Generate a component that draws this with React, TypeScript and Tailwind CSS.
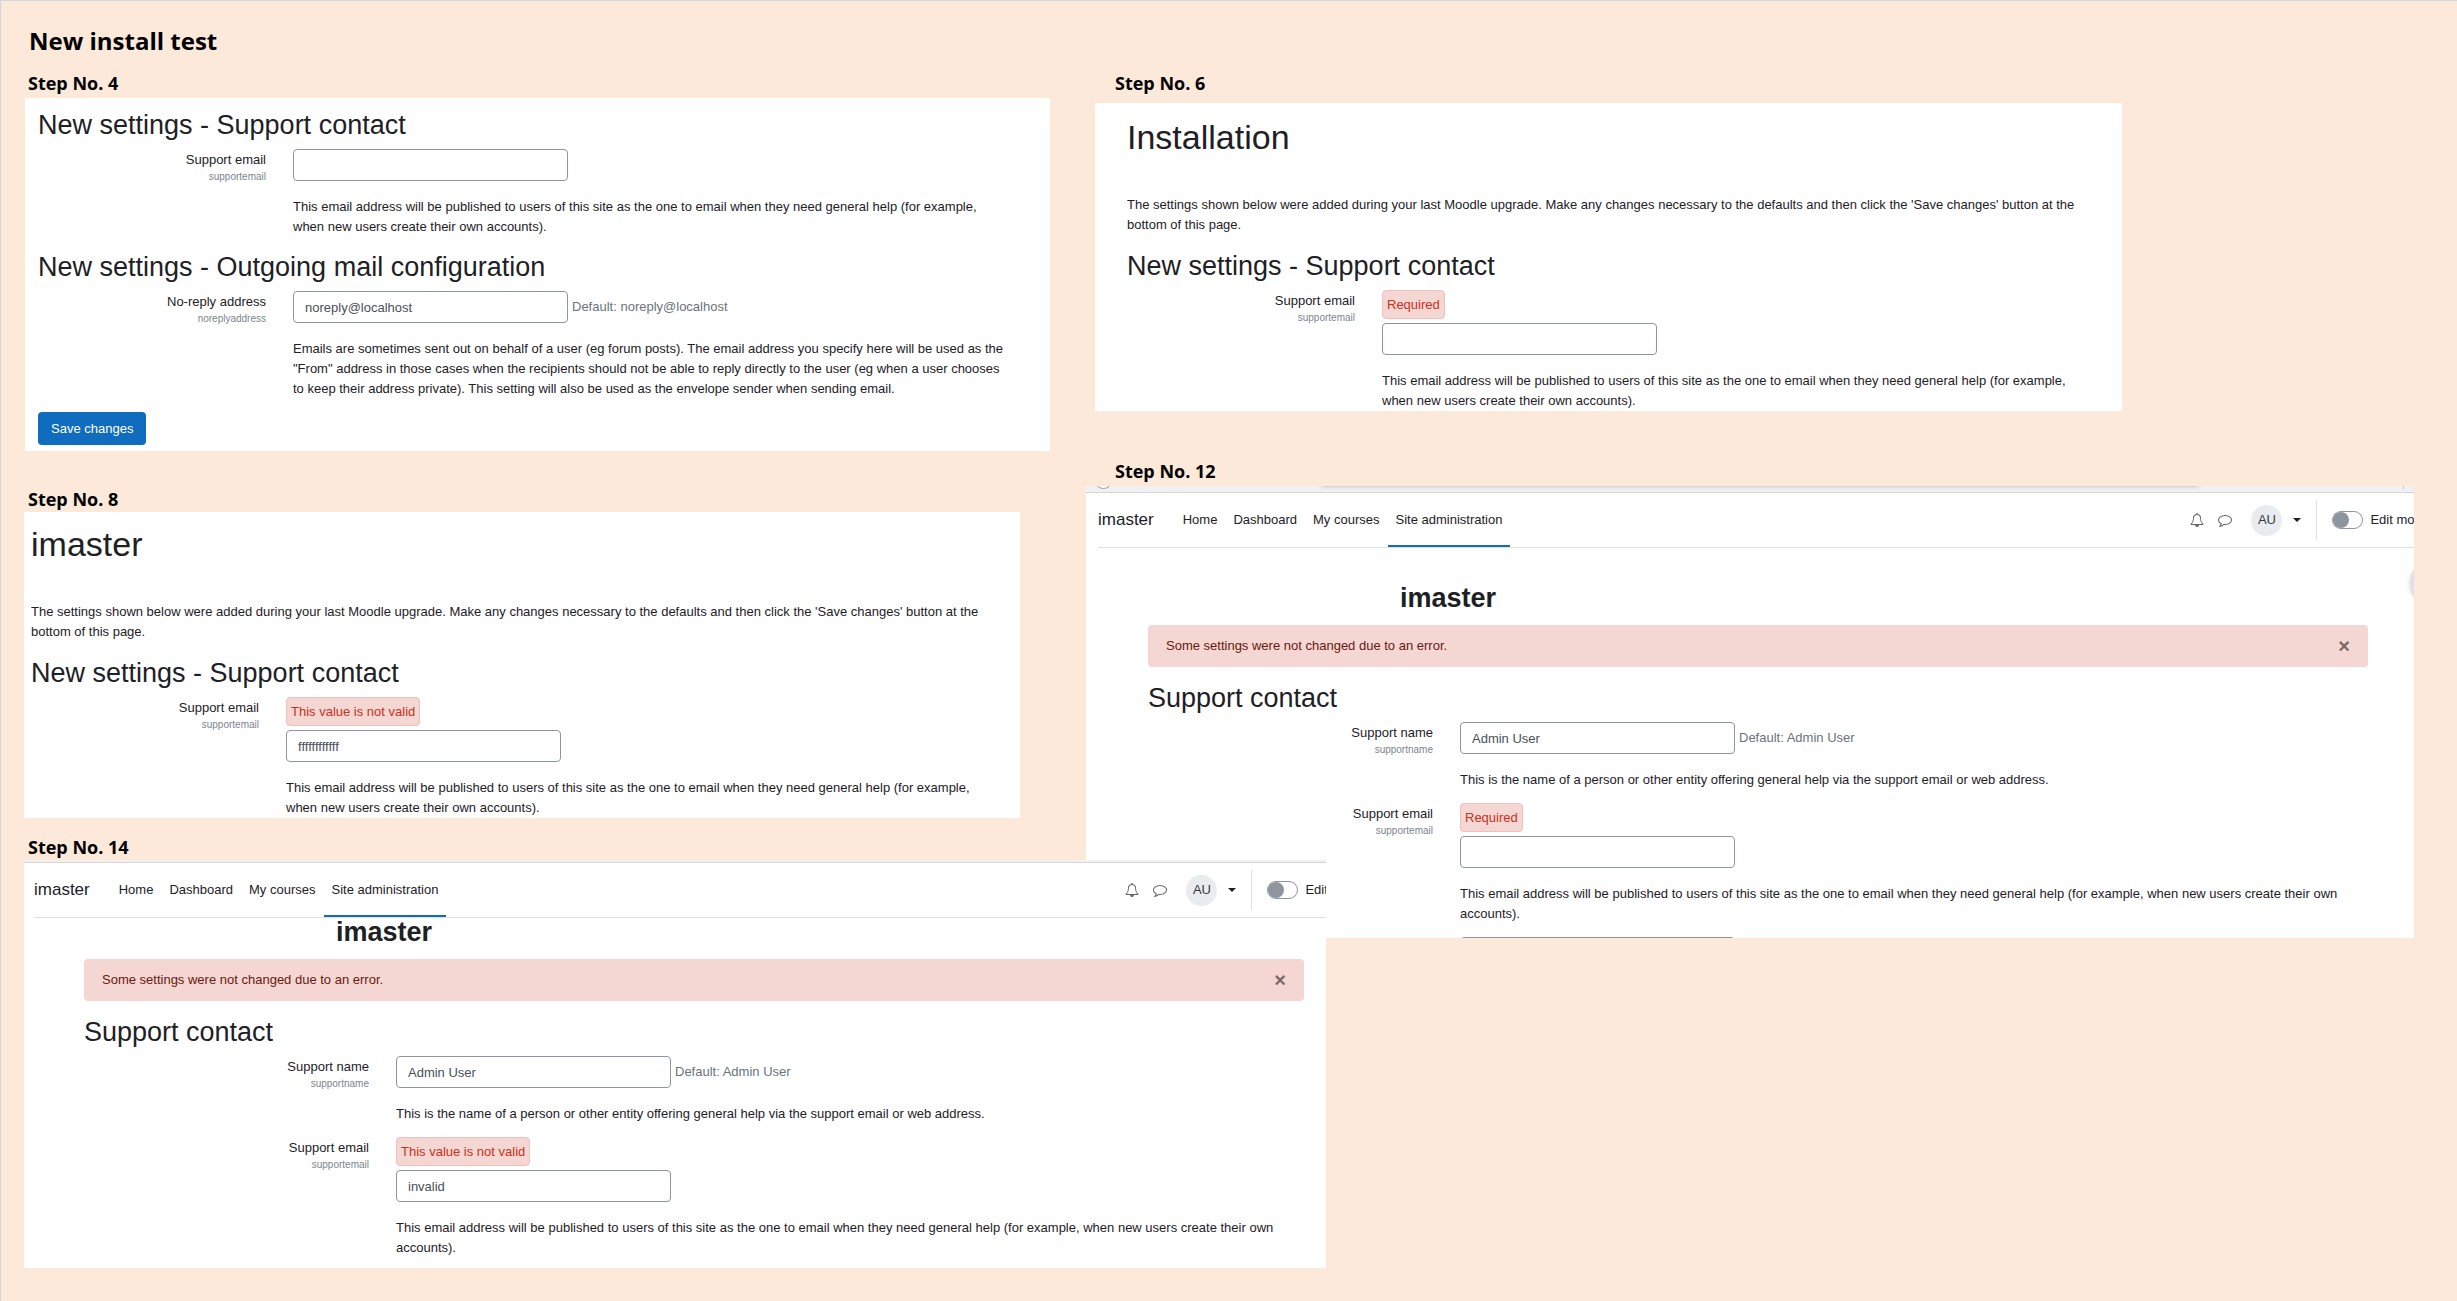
import { useId, type ReactNode } from 'react';

const EMAIL_HELP =
  'This email address will be published to users of this site as the one to email when they need general help (for example, when new users create their own accounts).';
const NAME_HELP =
  'This is the name of a person or other entity offering general help via the support email or web address.';
const NOREPLY_HELP =
  'Emails are sometimes sent out on behalf of a user (eg forum posts). The email address you specify here will be used as the "From" address in those cases when the recipients should not be able to reply directly to the user (eg when a user chooses to keep their address private). This setting will also be used as the envelope sender when sending email.';
const UPGRADE_NOTE =
  "The settings shown below were added during your last Moodle upgrade. Make any changes necessary to the defaults and then click the 'Save changes' button at the bottom of this page.";

const navLinks = ['Home', 'Dashboard', 'My courses', 'Site administration'];

function BellIcon() {
  return (
    <svg viewBox="0 0 1792 1792" className="size-3.5 fill-current" aria-hidden="true">
      <path d="M912 1696q0-16-16-16-59 0-101.5-42.5t-42.5-101.5q0-16-16-16t-16 16q0 73 51.5 124.5t124.5 51.5q16 0 16-16zm-666-288h1300q-266-300-266-832 0-51-24-105t-69-103-121.5-80.5-169.5-31.5-169.5 31.5-121.5 80.5-69 103-24 105q0 532-266 832zm1482 0q0 52-38 90t-90 38h-448q0 106-75 181t-181 75-181-75-75-181h-448q-52 0-90-38t-38-90q50-42 91-88t85-119.5 74.5-158.5 50-206 19.5-260q0-152 117-282.5t307-158.5q-8-19-8-39 0-40 28-68t68-28 68 28 28 68q0 20-8 39 190 28 307 158.5t117 282.5q0 139 19.5 260t50 206 74.5 158.5 85 119.5 91 88z" />
    </svg>
  );
}

function CommentIcon() {
  return (
    <svg viewBox="0 0 1792 1792" className="size-3.5 fill-current" aria-hidden="true">
      <path d="M896 384q-204 0-381.5 69.5t-282 187.5-104.5 255q0 112 71.5 213.5t201.5 175.5l87 50-27 96q-24 91-70 172 152-63 275-171l43-38 57 6q69 8 130 8 204 0 381.5-69.5t282-187.5 104.5-255-104.5-255-282-187.5-381.5-69.5zm896 512q0 174-120 321.5t-326 233-450 85.5q-70 0-145-8-198 175-460 242-49 14-114 22h-5q-15 0-27-10.5t-16-27.5v-1q-3-4-.5-12t2-10 4.5-9.5l6-9 7-8.5 8-9q7-8 31-34.5t34.5-38 31-39.5 32.5-51 27-59 26-76q-157-89-247.5-220t-90.5-281q0-130 71-248.5t191-204.5 286-136.5 348-50.5 348 50.5 286 136.5 191 204.5 71 248.5z" />
    </svg>
  );
}

function StepTitle({ children }: { children: ReactNode }) {
  return (
    <h2 className="font-['Open_Sans','Noto_Sans',sans-serif] text-lg/6 font-bold text-black">{children}</h2>
  );
}

function SectionTitle({ children }: { children: ReactNode }) {
  return <h3 className="text-[27px]/8">{children}</h3>;
}

function PageTitle({ children }: { children: ReactNode }) {
  return <h3 className="text-[34px]/[41px]">{children}</h3>;
}

type SettingProps = {
  label: string;
  name: string;
  help: string;
  value?: string;
  error?: string;
  fallback?: string;
  wide?: boolean;
};

function Setting({ label, name, help, value = '', error, fallback, wide }: SettingProps) {
  const id = useId();
  return (
    <div className="flex gap-[27px]">
      <div className={`shrink-0 pt-px text-right ${wide ? 'w-[285px]' : 'w-[228px]'}`}>
        <label htmlFor={id} className="block">{label}</label>
        <span className="block text-[10px]/[14px] text-[#7c858d]">{name}</span>
      </div>
      <div className={wide ? 'flex-1' : 'max-w-[712px] flex-1'}>
        {error && (
          <div className="mb-1 w-fit rounded border border-[#f0c0bd] bg-[#f4d6d2] px-1 pt-1 pb-[3px] text-[#ca3120]">
            {error}
          </div>
        )}
        <div className="flex items-center gap-1">
          <input
            id={id}
            type="text"
            defaultValue={value}
            className="h-8 w-[275px] rounded border border-[#8f959e] bg-white px-[11px] text-[#495057]"
          />
          {fallback && <span className="text-[#6a737b]">Default: {fallback}</span>}
        </div>
        <p className="mt-4">{help}</p>
      </div>
    </div>
  );
}

function NavBar({ cut }: { cut: string }) {
  const id = useId();
  return (
    <nav className="flex h-[55px] items-stretch border-b border-[#dee2e6] whitespace-nowrap">
      <a href="#" className="flex items-center text-[17px]">imaster</a>
      <div className="ml-[21px] flex">
        {navLinks.map((link) => (
          <a
            key={link}
            href="#"
            className={`flex items-center border-b-2 px-2 pt-0.5 ${
              link === 'Site administration' ? 'border-[#0f6cbf]' : 'border-transparent'
            }`}
          >
            {link}
          </a>
        ))}
      </div>
      <div className={`ml-auto flex items-center ${cut}`}>
        <button type="button" aria-label="Notifications" className="text-[#6a6360]">
          <BellIcon />
        </button>
        <button type="button" aria-label="Messages" className="ml-3.5 text-[#6a6360]">
          <CommentIcon />
        </button>
        <button type="button" aria-label="User menu" className="ml-[19px] flex items-center gap-[11px]">
          <span className="flex size-[31px] items-center justify-center rounded-full bg-[#e9ecef] text-[#343a40]">
            AU
          </span>
          <span className="border-x-4 border-t-4 border-x-transparent border-t-[#1d2125]" />
        </button>
        <span className="mr-[15px] ml-[15px] h-10 w-px bg-[#dee2e6]" />
        <input
          id={id}
          type="checkbox"
          role="switch"
          className="h-[18px] w-[31px] appearance-none rounded-full border border-[#8f959e] bg-white before:block before:size-4 before:rounded-full before:bg-[#8f959e]"
        />
        <label htmlFor={id} className="ml-[7px]">Edit mode</label>
      </div>
    </nav>
  );
}

function ErrorAlert() {
  return (
    <div role="alert" className="flex h-[42px] items-center justify-between rounded bg-[#f4d6d2] px-[18px] text-[#691911]">
      Some settings were not changed due to an error.
      <button type="button" aria-label="Close" className="text-xl/5 font-bold text-[#7a6b69]">
        ×
      </button>
    </div>
  );
}

export default function App() {
  return (
    <main className="grid min-h-screen grid-cols-[1085fr_1371fr] items-start border-t border-l border-[#cfd5e3] bg-[#fce9da] font-['Liberation_Sans',Arial,sans-serif] text-[13px]/5 text-[#1d2125]">
      {/* Left column sits above the right one, its last panel runs over it */}
      <div className="z-10 min-w-0 pt-6 pl-[23px]">
        <div className="pl-[5px]">
          <h1 className="font-['Open_Sans','Noto_Sans',sans-serif] text-2xl/8 font-bold text-black">New install test</h1>
        </div>

        <div className="mt-3.5 mb-[3px] pl-1">
          <StepTitle>Step No. 4</StepTitle>
        </div>
        <section className="mr-9 ml-px bg-white px-[13px] pt-[11px] pb-1.5">
          <SectionTitle>New settings - Support contact</SectionTitle>
          <div className="mt-2 mb-3.5">
            <Setting label="Support email" name="supportemail" help={EMAIL_HELP} />
          </div>
          <SectionTitle>New settings - Outgoing mail configuration</SectionTitle>
          <div className="mt-2 mb-[13px]">
            <Setting
              label="No-reply address"
              name="noreplyaddress"
              value="noreply@localhost"
              fallback="noreply@localhost"
              help={NOREPLY_HELP}
            />
          </div>
          <button type="button" className="h-[33px] rounded bg-[#0f6cbf] px-[13px] text-white">
            Save changes
          </button>
        </section>

        <div className="mt-9 mb-px pl-1">
          <StepTitle>Step No. 8</StepTitle>
        </div>
        <section className="mr-[66px] bg-white pt-3 pl-[7px]">
          <PageTitle>imaster</PageTitle>
          <p className="mt-[37px] mb-[15px] max-w-[980px]">{UPGRADE_NOTE}</p>
          <SectionTitle>New settings - Support contact</SectionTitle>
          <div className="mt-2">
            <Setting
              label="Support email"
              name="supportemail"
              value="ffffffffffff"
              error="This value is not valid"
              help={EMAIL_HELP}
            />
          </div>
        </section>

        <div className="mt-[17px] mb-px pl-1">
          <StepTitle>Step No. 14</StepTitle>
        </div>
        <section className="-mr-[240px] overflow-hidden bg-white pb-2.5">
          <div className="h-[3px] border-b border-[#d6d6d6] bg-[#f1f1f1]" />
          <div className="pl-2.5">
            <NavBar cut="-mr-[38px]" />
          </div>
          <div className="-mt-0.5 pr-[22px] pl-[60px]">
            <h3 className="mb-[11px] pl-[252px] text-[27px]/8 font-bold">imaster</h3>
            <ErrorAlert />
            <div className="mt-[15px] mb-2">
              <SectionTitle>Support contact</SectionTitle>
            </div>
            <div className="flex flex-col gap-[13px]">
              <Setting wide label="Support name" name="supportname" value="Admin User" fallback="Admin User" help={NAME_HELP} />
              <Setting
                wide
                label="Support email"
                name="supportemail"
                value="invalid"
                error="This value is not valid"
                help={EMAIL_HELP}
              />
            </div>
          </div>
        </section>
      </div>

      <div className="min-w-0 pt-[70px] pr-[43px]">
        <div className="mb-2 pl-[29px]">
          <StepTitle>Step No. 6</StepTitle>
        </div>
        <section className="mr-[292px] ml-[9px] bg-white pt-3.5 pl-8">
          <PageTitle>Installation</PageTitle>
          <p className="mt-[37px] mb-[15px] max-w-[980px]">{UPGRADE_NOTE}</p>
          <SectionTitle>New settings - Support contact</SectionTitle>
          <div className="mt-2">
            <Setting label="Support email" name="supportemail" error="Required" help={EMAIL_HELP} />
          </div>
        </section>

        <div className="mt-12 mb-[3px] pl-[29px]">
          <StepTitle>Step No. 12</StepTitle>
        </div>
        <section className="relative overflow-hidden bg-white">
          {/* Lower edge of the browser toolbar */}
          <div className="relative h-[7px] overflow-hidden border-b border-[#d6d6d6] bg-[#f1f1f1]">
            <span className="absolute -top-4 left-2 size-[19px] rounded-full border border-[#a0a0a0] bg-white" />
            <span className="absolute -top-2 right-[215px] left-[235px] h-2 rounded shadow-[0_0_4px_#0004]" />
            <span className="absolute top-0 right-2.5 h-[3px] w-px bg-[#c4c4c4]" />
          </div>
          <div className="pl-3">
            <NavBar cut="-mr-[15px]" />
          </div>
          <button
            type="button"
            aria-label="Open block drawer"
            className="absolute top-[76px] -right-9 size-10 rounded-full bg-[#dee2e6] shadow-[0_2px_4px_#0003]"
          />
          <div className="pt-[34px] pr-[46px] pl-[62px]">
            <h3 className="mb-[11px] pl-[252px] text-[27px]/8 font-bold">imaster</h3>
            <ErrorAlert />
            <div className="mt-[15px] mb-2">
              <SectionTitle>Support contact</SectionTitle>
            </div>
            <div className="flex flex-col gap-[13px]">
              <Setting wide label="Support name" name="supportname" value="Admin User" fallback="Admin User" help={NAME_HELP} />
              <Setting wide label="Support email" name="supportemail" error="Required" help={EMAIL_HELP} />
            </div>
            {/* Only the top edge of the next field shows */}
            <div className="mt-[13px] h-px overflow-hidden pl-[312px]">
              <input type="text" aria-label="Support page" className="h-8 w-[275px] rounded border border-[#8f959e]" />
            </div>
          </div>
        </section>
      </div>
    </main>
  );
}
